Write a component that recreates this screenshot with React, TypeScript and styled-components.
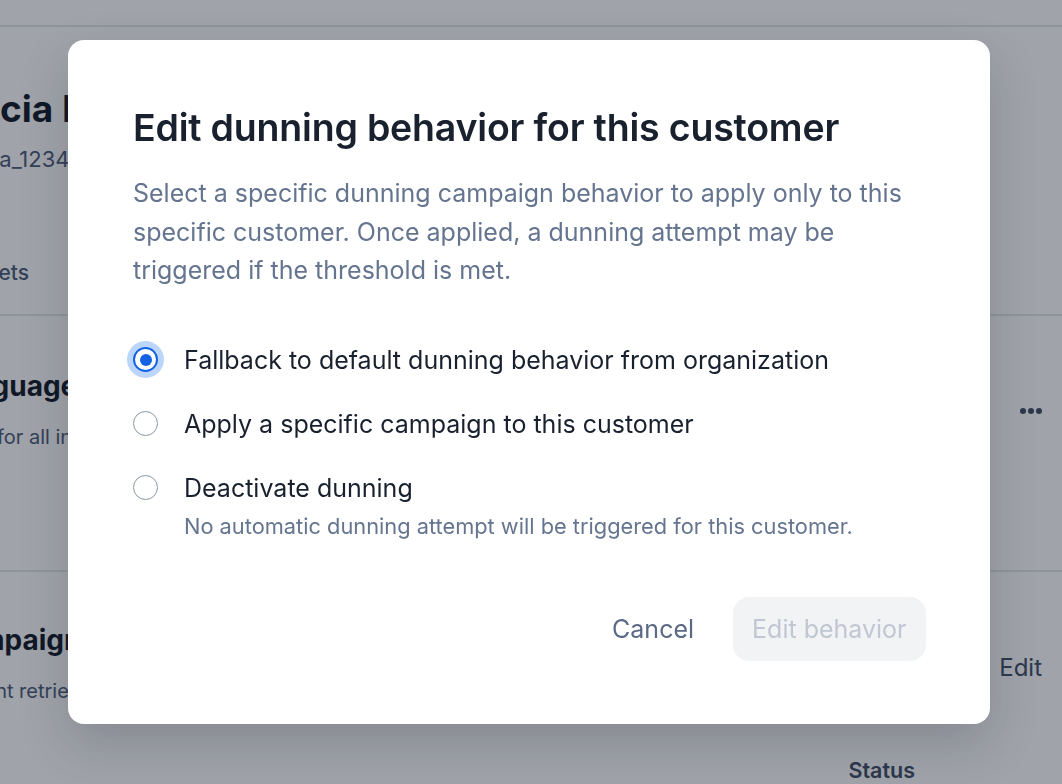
import React, { useState } from "react";
import styled, { createGlobalStyle } from "styled-components";

const Global = createGlobalStyle`
  html, body { margin: 0; padding: 0; }
  body {
    font-family: Inter, "Noto Sans", "Liberation Sans", sans-serif;
    background: #ffffff;
    color: #111827;
    overflow: hidden;
    -webkit-font-smoothing: antialiased;
  }
`;

/* ---------- background page ---------- */
const Page = styled.div`
  width: 1062px;
  height: 784px;
  overflow: hidden;
  background: #fff;
`;

const TopBar = styled.div`
  height: 25px;
  border-bottom: 2px solid #e3e5ea;
`;

const Main = styled.div`
  display: flex;
  flex-direction: column;
  margin-left: -44px;
`;

const Header = styled.div`
  display: flex;
  flex-direction: column;
  padding-top: 60px;
  gap: 14px;
`;

const Name = styled.div`
  font-size: 37px;
  font-weight: 700;
  line-height: 44px;
  color: #111827;
`;

const CustomerId = styled.div`
  font-size: 22px;
  line-height: 28px;
  color: #4b5b78;
`;

const Tabs = styled.div`
  display: flex;
  gap: 60px;
  margin-top: 86px;
  padding-bottom: 27px;
  border-bottom: 2px solid #e3e5ea;
`;

const Tab = styled.div`
  font-size: 21px;
  font-weight: 500;
  line-height: 28px;
  color: #4b5b78;
`;

const Section = styled.div<{ $h: number; $line: boolean }>`
  display: flex;
  flex-direction: column;
  height: ${(p) => p.$h}px;
  padding-right: 20px;
  box-sizing: border-box;
  border-bottom: ${(p) => (p.$line ? "2px solid #e3e5ea" : "none")};
`;

const SectionRow = styled.div<{ $top: number }>`
  display: flex;
  align-items: center;
  justify-content: space-between;
  margin-top: ${(p) => p.$top}px;
`;

const SectionHead = styled.div<{ $shift: number }>`
  display: flex;
  flex-direction: column;
  gap: 21px;
  margin-left: ${(p) => p.$shift}px;
`;

const SectionTitle = styled.div`
  font-size: 28px;
  font-weight: 700;
  line-height: 32px;
  color: #111827;
`;

const SectionDesc = styled.div`
  font-size: 20px;
  line-height: 28px;
  color: #4b5b78;
`;

const Dots = styled.div`
  display: flex;
  gap: 2px;
  span {
    width: 6px;
    height: 6px;
    border-radius: 50%;
    background: #3f4d66;
  }
`;

const LinkText = styled.div`
  font-size: 24px;
  color: #3f4d66;
  line-height: 30px;
  margin-top: 6px;
`;

const TableHead = styled.div`
  display: flex;
  justify-content: flex-end;
  padding-right: 147px;
  margin-top: 23px;
`;

const HeadCell = styled.div`
  font-size: 21.5px;
  font-weight: 600;
  color: #3f4d66;
  line-height: 30px;
`;

/* ---------- overlay & modal ---------- */
const Overlay = styled.div`
  position: fixed;
  inset: 0;
  background: rgba(17, 24, 39, 0.4);
  display: flex;
  justify-content: center;
  align-items: flex-start;
  padding: 40px 4px 0 0;
`;

const Modal = styled.div`
  width: 922px;
  height: 684px;
  box-sizing: border-box;
  background: #fff;
  border-radius: 16px;
  box-shadow: 0 20px 50px rgba(15, 23, 42, 0.18);
  padding: 64px 64px 63px 65px;
  display: flex;
  flex-direction: column;
`;

const Title = styled.h2`
  margin: 0;
  font-size: 37.5px;
  font-weight: 600;
  line-height: 48px;
  color: #19212e;
  letter-spacing: -0.2px;
`;

const Description = styled.p`
  margin: 22px 0 0;
  font-size: 25px;
  line-height: 38.5px;
  color: #65758f;
`;

const Options = styled.div`
  display: flex;
  flex-direction: column;
  gap: 26px;
  margin-top: 51px;
`;

const Option = styled.label`
  display: grid;
  grid-template-columns: 25px 1fr;
  column-gap: 26px;
  align-items: center;
  cursor: pointer;
`;

const RadioCircle = styled.span<{ $checked: boolean }>`
  width: 25px;
  height: 25px;
  box-sizing: border-box;
  border-radius: 50%;
  border: ${(p) => (p.$checked ? "2px solid #1463e6" : "1.5px solid #8c96a8")};
  background: #fff;
  box-shadow: ${(p) => (p.$checked ? "0 0 0 6px #bcd6fb" : "none")};
  display: flex;
  align-items: center;
  justify-content: center;
  &::after {
    content: "";
    width: 12px;
    height: 12px;
    border-radius: 50%;
    background: ${(p) => (p.$checked ? "#1463e6" : "transparent")};
  }
`;

const OptionLabel = styled.span`
  font-size: 25px;
  line-height: 38px;
  color: #19212e;
`;

const OptionHint = styled.span`
  grid-column: 2;
  margin-top: 4px;
  font-size: 21.8px;
  line-height: 30px;
  color: #65758f;
`;

const Footer = styled.div`
  margin-top: auto;
  display: flex;
  justify-content: flex-end;
  gap: 19px;
`;

const Button = styled.button<{ $variant: "ghost" | "disabled" }>`
  height: 64px;
  padding: 0 19.5px;
  border: none;
  border-radius: 16px;
  font-family: inherit;
  font-size: 25px;
  background: ${(p) => (p.$variant === "disabled" ? "#f2f3f5" : "transparent")};
  color: ${(p) => (p.$variant === "disabled" ? "#c1c7d2" : "#5a6985")};
  cursor: ${(p) => (p.$variant === "disabled" ? "default" : "pointer")};
`;

const options = [
  { id: "fallback", label: "Fallback to default dunning behavior from organization" },
  { id: "campaign", label: "Apply a specific campaign to this customer" },
  {
    id: "deactivate",
    label: "Deactivate dunning",
    hint: "No automatic dunning attempt will be triggered for this customer.",
  },
];

export default function App() {
  const [value, setValue] = useState("fallback");
  return (
    <>
      <Global />
      <Page>
        <TopBar />
        <Main>
          <Header>
            <Name>Lucia Reyes</Name>
            <CustomerId>Lucia_1234</CustomerId>
          </Header>
          <Tabs>
            <Tab>Wallets</Tab>
            <Tab>Invoices</Tab>
          </Tabs>
          <Section $h={256} $line>
            <SectionRow $top={54}>
              <SectionHead $shift={-14}>
                <SectionTitle>Language</SectionTitle>
                <SectionDesc>Used for all invoices</SectionDesc>
              </SectionHead>
              <Dots>
                <span />
                <span />
                <span />
              </Dots>
            </SectionRow>
          </Section>
          <Section $h={160} $line={false}>
            <SectionRow $top={52}>
              <SectionHead $shift={-14}>
                <SectionTitle>Campaign</SectionTitle>
                <SectionDesc>Current retries</SectionDesc>
              </SectionHead>
              <LinkText>Edit</LinkText>
            </SectionRow>
          </Section>
          <TableHead>
            <HeadCell>Status</HeadCell>
          </TableHead>
        </Main>
      </Page>
      <Overlay>
        <Modal role="dialog">
          <Title>Edit dunning behavior for this customer</Title>
          <Description>
            Select a specific dunning campaign behavior to apply only to this specific customer.
            Once applied, a dunning attempt may be triggered if the threshold is met.
          </Description>
          <Options>
            {options.map((o) => (
              <Option key={o.id} onClick={() => setValue(o.id)}>
                <RadioCircle $checked={value === o.id} />
                <OptionLabel>{o.label}</OptionLabel>
                {o.hint && <OptionHint>{o.hint}</OptionHint>}
              </Option>
            ))}
          </Options>
          <Footer>
            <Button $variant="ghost">Cancel</Button>
            <Button $variant="disabled" disabled>
              Edit behavior
            </Button>
          </Footer>
        </Modal>
      </Overlay>
    </>
  );
}
